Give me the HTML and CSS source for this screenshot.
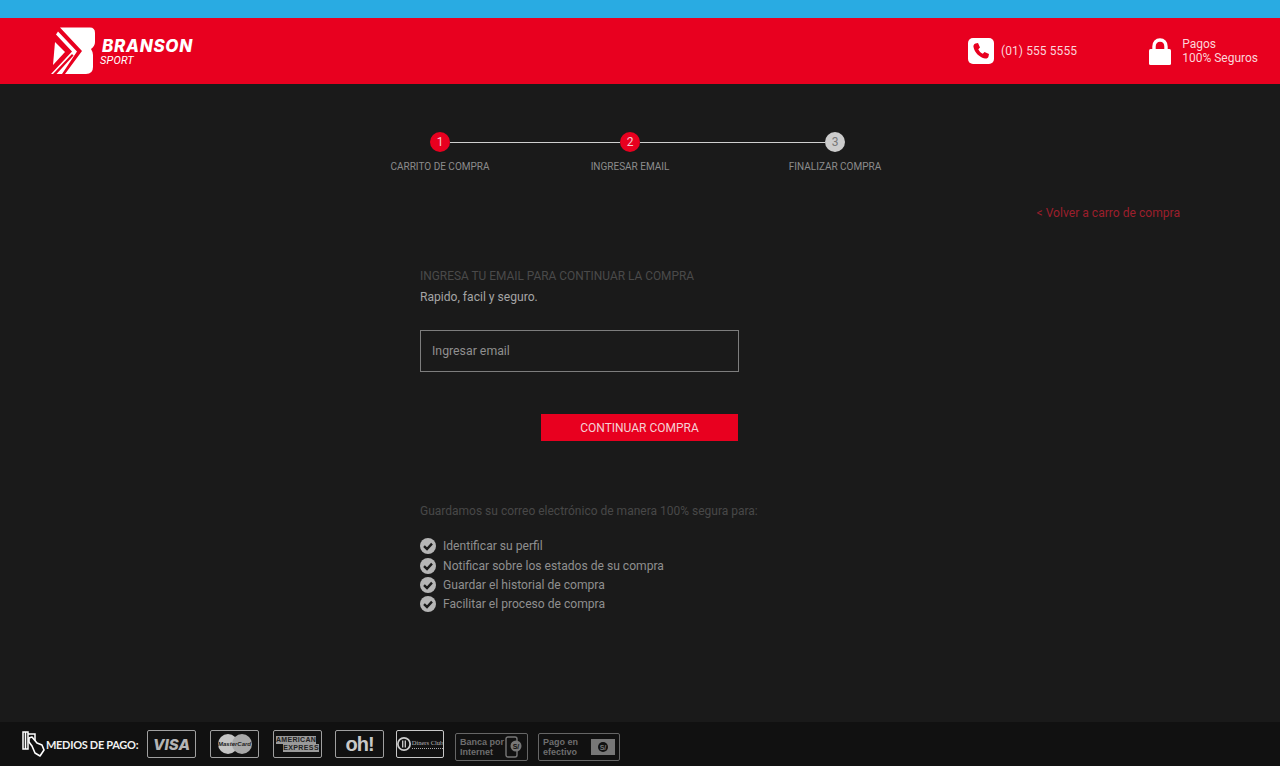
FILE: index.html
```html
<!DOCTYPE html>
<html lang="es">
<head>
    <meta charset="UTF-8">
    <meta name="viewport" content="width=device-width, initial-scale=1.0">
    <title>Branson Sport - Ingresar email</title>
    <link rel="stylesheet" href="styles.css">
</head>
<body>
    <div class="top-strip"></div>

    <header class="site-header">
        <a class="brand" href="#">
            <svg class="brand-mark" viewBox="0 0 46 48" width="46" height="48">
                <path fill="#fff" d="M10 .5H40Q45 .5 45 6V15Q45 19 41 22Q43 25 43 28V40Q43 47 36 47H15L32 24Z"/>
                <path fill="#fff" d="M8 4.400L27 24.500L12 47H1L22 24.500L6 7.500Z"/>
                <path fill="#fff" d="M5 15L15 25L3 38Z"/>
                <path fill="#e8001f" d="M3 47L22 27L23.500 28.500L6.500 47Z"/>
            </svg>
            <span class="brand-text">
                <span class="brand-name">BRANSON</span>
                <span class="brand-sub">SPORT</span>
            </span>
        </a>
        <div class="header-info">
            <div class="contact phone">
                <svg viewBox="0 0 26 26" width="26" height="26">
                    <rect width="26" height="26" rx="5" fill="#fff"/>
                    <path fill="#e8001f" d="M7.500 5.500L10 5L12 9.500L10.300 11.200C11 13 13 15 14.800 15.700L16.500 14L21 16L20.500 18.500C20 20.300 18.500 20.800 17 20.500C11.500 19.500 6.500 14.500 5.500 9C5.200 7.500 5.800 6 7.500 5.500Z"/>
                </svg>
                <span>(01) 555 5555</span>
            </div>
            <div class="contact secure">
                <svg viewBox="0 0 22 27" width="22" height="27">
                    <path fill="none" stroke="#fff" stroke-width="3.400" d="M5 13V8.500C5 4.500 7.500 2 11 2S17 4.500 17 8.500V13"/>
                    <rect y="11" width="22" height="16" rx="1.500" fill="#fff"/>
                </svg>
                <span>Pagos<br>100% Seguros</span>
            </div>
        </div>
    </header>

    <main class="content">
        <ol class="steps">
            <li class="step done"><span class="step-dot">1</span><span class="step-label">CARRITO DE COMPRA</span></li>
            <li class="step-line first"></li>
            <li class="step done"><span class="step-dot">2</span><span class="step-label">INGRESAR EMAIL</span></li>
            <li class="step-line second"></li>
            <li class="step"><span class="step-dot">3</span><span class="step-label">FINALIZAR COMPRA</span></li>
        </ol>

        <div class="back-row"><a href="#" class="back-link">&lt; Volver a carro de compra</a></div>

        <section class="email-box">
            <h2 class="email-title">INGRESA TU EMAIL PARA CONTINUAR LA COMPRA</h2>
            <p class="email-sub">Rapido, facil y seguro.</p>
            <form class="email-form" action="#" method="POST">
                <input type="email" class="email-input" placeholder="Ingresar email">
                <button type="submit" class="btn-continue">CONTINUAR COMPRA</button>
            </form>

            <p class="why-title">Guardamos su correo electrónico de manera 100% segura para:</p>
            <ul class="why-list">
                <li><svg class="check" viewBox="0 0 16 16"><circle cx="8" cy="8" r="8"/><path d="M4 8.200L7 11L12 5.600"/></svg>Identificar su perfil</li>
                <li><svg class="check" viewBox="0 0 16 16"><circle cx="8" cy="8" r="8"/><path d="M4 8.200L7 11L12 5.600"/></svg>Notificar sobre los estados de su compra</li>
                <li><svg class="check" viewBox="0 0 16 16"><circle cx="8" cy="8" r="8"/><path d="M4 8.200L7 11L12 5.600"/></svg>Guardar el historial de compra</li>
                <li><svg class="check" viewBox="0 0 16 16"><circle cx="8" cy="8" r="8"/><path d="M4 8.200L7 11L12 5.600"/></svg>Facilitar el proceso de compra</li>
            </ul>
        </section>
    </main>

    <footer class="pay-bar">
        <svg class="pay-hand" viewBox="0 0 24 26" width="24" height="26">
            <path fill="none" stroke="#fff" stroke-width="1.500" d="M2 1H7V18H2ZM4.500 1V18M7 3H14V11"/>
            <path fill="#111" stroke="#fff" stroke-width="1.600" stroke-linejoin="round" d="M8 7L11 6L16 12L21 14L23 19L19 25L14 22L11 15L8 11Z"/>
        </svg>
        <span class="pay-title">MEDIOS DE PAGO:</span>
        <span class="card card-visa">VISA</span>
        <span class="card card-master">
            <svg viewBox="0 0 36 20" width="36" height="20"><circle cx="11" cy="10" r="10" fill="#c4c4c4"/><circle cx="25" cy="10" r="10" fill="#a8a8a8"/></svg>
            <span class="master-text">MasterCard</span>
        </span>
        <span class="card card-amex"><span class="amex-top">AMERICAN</span><span class="amex-bottom">EXPRESS</span></span>
        <span class="card card-oh">oh!</span>
        <span class="card card-diners">
            <svg viewBox="0 0 16 16" width="14" height="14"><circle cx="8" cy="8" r="7" fill="none" stroke="#ccc" stroke-width="2"/><path d="M6.500 4V12M9.500 4V12" stroke="#ccc" stroke-width="1.500"/></svg>
            <span class="diners-name">Diners Club</span>
        </span>
        <span class="card card-dim card-bank">
            <span>Banca por<br>Internet</span>
            <svg viewBox="0 0 18 22" width="18" height="22"><rect x="1" y="1" width="11" height="20" rx="2" fill="none" stroke="#777" stroke-width="1.400"/><circle cx="11" cy="10" r="5.500" fill="#777"/><text x="11" y="13" class="coin-text">S/</text></svg>
        </span>
        <span class="card card-dim card-cash">
            <span>Pago en<br>efectivo</span>
            <svg viewBox="0 0 24 16" width="24" height="16"><rect width="24" height="16" fill="#777"/><circle cx="12" cy="8" r="5" fill="#111"/><text x="12" y="11" class="coin-text light">S/</text></svg>
        </span>
    </footer>
</body>
</html>
```

FILE: styles.css
```css
* {
    margin: 0;
    padding: 0;
    box-sizing: border-box;
}

html, body {
    height: 100%;
    overflow: hidden;
}

body {
    display: flex;
    flex-direction: column;
    background-color: #1a1a1a;
    color: #aaa;
    font-family: 'Roboto', 'Liberation Sans', sans-serif;
    font-size: 12px;
}

a {
    text-decoration: none;
}

.top-strip {
    height: 18px;
    background-color: #29abe2;
}

/* Header */
.site-header {
    display: flex;
    justify-content: space-between;
    align-items: center;
    height: 66px;
    padding: 0 22px 0 50px;
    background-color: #e8001f;
    color: #fff;
}

.brand {
    display: flex;
    align-items: center;
    gap: 5px;
    color: #fff;
}

.brand-text {
    display: flex;
    flex-direction: column;
}

.brand-name {
    font-family: 'Inter', sans-serif;
    font-size: 17px;
    font-weight: 800;
    font-style: italic;
    line-height: 17px;
    letter-spacing: 0.7px;
    margin-top: 3px;
    margin-left: 1px;
}

.brand-sub {
    font-size: 11px;
    font-style: italic;
    line-height: 12px;
    letter-spacing: 0.2px;
    margin-left: -1px;
}

.header-info {
    display: flex;
    align-items: center;
    gap: 72px;
}

.contact {
    display: flex;
    align-items: center;
    color: #fbd5da;
    font-size: 12px;
    line-height: 14px;
}

.phone {
    gap: 7px;
    letter-spacing: 0.1px;
}

.secure {
    gap: 11px;
}

/* Stepper */
.content {
    flex: 1;
    padding-top: 48px;
}

.steps {
    display: flex;
    align-items: flex-start;
    width: 415px;
    margin-left: 430px;
    list-style: none;
}

.step {
    display: flex;
    flex-direction: column;
    align-items: center;
    width: 20px;
}

.step-line {
    height: 1px;
    margin-top: 10px;
    background-color: #d0d0d0;
}

.step-line.first {
    width: 170px;
}

.step-line.second {
    width: 185px;
}

.step-dot {
    width: 20px;
    height: 20px;
    flex-shrink: 0;
    border-radius: 50%;
    background-color: #ccc;
    color: #777;
    font-size: 12px;
    line-height: 20px;
    text-align: center;
}

.done .step-dot {
    background-color: #e8001f;
    color: #f5c8ce;
}

.step-label {
    margin-top: 8px;
    color: #8c8c8c;
    font-size: 10px;
    line-height: 14px;
    white-space: nowrap;
}

.back-row {
    width: 1180px;
    margin-top: 31px;
    text-align: right;
}

.back-link {
    color: #9c1f2c;
    font-size: 12.100px;
    line-height: 16px;
}

/* Email form */
.email-box {
    width: 345px;
    margin: 48px 0 0 420px;
}

.email-title {
    color: #4a4a4a;
    font-size: 11.900px;
    font-weight: 400;
    line-height: 14px;
}

.email-sub {
    margin-top: 7px;
    color: #a5a5a5;
    font-size: 12.100px;
    line-height: 14px;
}

.email-form {
    display: flex;
    flex-direction: column;
    align-items: flex-end;
    width: 319px;
    margin-top: 26px;
}

.email-input {
    width: 100%;
    height: 42px;
    padding: 0 11px;
    border: 1px solid #7d7d7d;
    background-color: transparent;
    color: #aaa;
    font-family: inherit;
    font-size: 12.300px;
    outline: none;
}

.email-input::placeholder {
    color: #8f8f8f;
    opacity: 1;
}

.btn-continue {
    width: 197px;
    height: 27px;
    margin: 42px 1px 0 0;
    border: none;
    background-color: #e8001f;
    color: #f5d0d5;
    font-family: inherit;
    font-size: 12px;
    cursor: pointer;
}

.why-title {
    margin-top: 63px;
    color: #484848;
    font-size: 12px;
    line-height: 15px;
    white-space: nowrap;
}

.why-list {
    margin-top: 16px;
    list-style: none;
    color: #8f8f8f;
    font-size: 12.100px;
}

.why-list li {
    display: flex;
    align-items: center;
    gap: 7px;
    height: 19px;
}

.why-list li:first-child {
    height: 21px;
}

.check {
    width: 16px;
    height: 16px;
}

.check circle {
    fill: #b5b5b5;
}

.check path {
    fill: none;
    stroke: #1a1a1a;
    stroke-width: 2.400;
}

/* Payment bar */
.pay-bar {
    display: flex;
    align-items: center;
    height: 44px;
    padding-left: 21px;
    background-color: #111;
}

.pay-hand {
    margin-right: 1px;
}

.pay-title {
    width: 101px;
    color: #f0f0f0;
    font-family: 'Lato', sans-serif;
    font-size: 11px;
    font-weight: 700;
    letter-spacing: -0.3px;
    white-space: nowrap;
}

.card {
    display: flex;
    align-items: center;
    justify-content: center;
    width: 49px;
    height: 28px;
    margin-right: 14px;
    border: 1.500px solid #a0a0a0;
    border-radius: 2px;
    color: #b5b5b5;
    font-family: 'Liberation Sans', sans-serif;
}

.card-visa {
    font-family: 'Inter', sans-serif;
    font-size: 15px;
    font-weight: 800;
    font-style: italic;
}

.card-master {
    position: relative;
}

.master-text {
    position: absolute;
    color: #222;
    font-size: 6px;
    font-weight: 700;
    font-style: italic;
}

.card-amex {
    flex-direction: column;
    font-size: 7px;
    font-weight: 700;
    line-height: 8px;
    margin-right: 13px;
}

.amex-top,
.amex-bottom {
    background-color: #9a9a9a;
    color: #222;
}

.amex-top {
    align-self: flex-start;
    margin-left: 2px;
    letter-spacing: 0.3px;
}

.amex-bottom {
    align-self: flex-end;
    margin-right: 2px;
    letter-spacing: 0.4px;
}

.card-oh {
    margin-right: 12px;
    font-size: 20px;
    font-weight: 700;
    letter-spacing: -1px;
    color: #c8c8c8;
}

.card-diners {
    gap: 1px;
    width: 48px;
    margin-right: 11px;
    border-color: #c8c8c8;
    font-family: 'Liberation Serif', serif;
    white-space: nowrap;
}

.card-diners svg {
    flex-shrink: 0;
}

.diners-name {
    padding-bottom: 1px;
    border-bottom: 1px dotted #aaa;
    font-size: 6.500px;
    line-height: 8px;
}

.card-dim {
    justify-content: space-between;
    margin-top: 5px;
    padding: 0 4px;
    border-color: #666;
    color: #6e6e6e;
    font-size: 9px;
    font-weight: 700;
    line-height: 10px;
}

.card-bank {
    width: 73px;
    margin-right: 10px;
}

.card-cash {
    width: 82px;
    padding-right: 4px;
}

.coin-text {
    fill: #111;
    font-size: 7px;
    font-weight: 700;
    text-anchor: middle;
}

.coin-text.light {
    fill: #777;
}
```
